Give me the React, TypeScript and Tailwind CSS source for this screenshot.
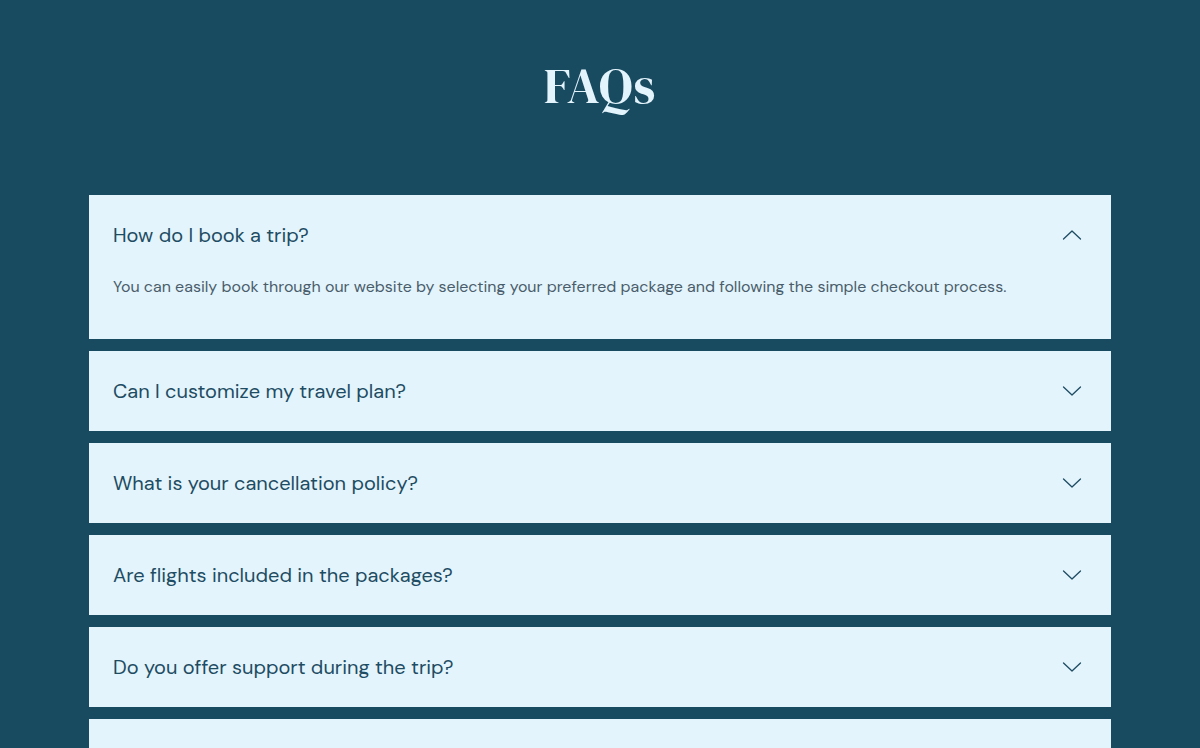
import { useState } from 'react';

interface FaqItem {
  question: string;
  answer: string;
}

const faqs: FaqItem[] = [
  {
    question: 'How do I book a trip?',
    answer:
      'You can easily book through our website by selecting your preferred package and following the simple checkout process.',
  },
  {
    question: 'Can I customize my travel plan?',
    answer:
      'Yes. Our team can tailor any itinerary to match your interests, schedule and budget.',
  },
  {
    question: 'What is your cancellation policy?',
    answer:
      'Cancellations made 30 days before departure receive a full refund. Later cancellations may incur a fee.',
  },
  {
    question: 'Are flights included in the packages?',
    answer:
      'Some packages include flights. Check the package details to see exactly what is covered.',
  },
  {
    question: 'Do you offer support during the trip?',
    answer: 'Our support team is available 24/7 while you are travelling.',
  },
  {
    question: 'What payment methods do you accept?',
    answer: 'We accept all major credit cards, debit cards and bank transfers.',
  },
];

function Chevron({ open }: { open: boolean }) {
  return (
    <svg
      width="20"
      height="12"
      viewBox="0 0 20 12"
      fill="none"
      stroke="#1e4c63"
      strokeWidth="1.3"
      strokeLinecap="round"
      strokeLinejoin="round"
      className="shrink-0"
    >
      {open ? <path d="M1.5 10 10 2l8.5 8" /> : <path d="M1.5 2 10 10l8.5-8" />}
    </svg>
  );
}

export default function App() {
  const [openIdx, setOpenIdx] = useState<number | null>(0);

  return (
    <div
      className="min-h-screen bg-[#184a60] px-[89px] pt-[61px] pb-20"
      style={{ fontFamily: '"DM Sans", Inter, "Noto Sans", sans-serif' }}
    >
      <h1 className="text-center text-[50px] leading-none tracking-[0.02em] text-[#e3f4fc] font-['DM_Serif_Display','Liberation_Serif',serif] mb-[84px]">
        FAQs
      </h1>

      <div className="flex flex-col gap-3">
        {faqs.map((faq, idx) => {
          const isOpen = openIdx === idx;
          return (
            <div key={faq.question} className="bg-[#e3f4fc]">
              <button
                onClick={() => setOpenIdx(isOpen ? null : idx)}
                className="flex h-20 w-full items-center justify-between px-6 pr-[29px] text-left"
              >
                <span className="text-[20px] text-[#1e4c63]">{faq.question}</span>
                <Chevron open={isOpen} />
              </button>
              {isOpen && (
                <p className="px-6 pb-10 text-base leading-6 text-[#4a5d6b]">
                  {faq.answer}
                </p>
              )}
            </div>
          );
        })}
      </div>
    </div>
  );
}
